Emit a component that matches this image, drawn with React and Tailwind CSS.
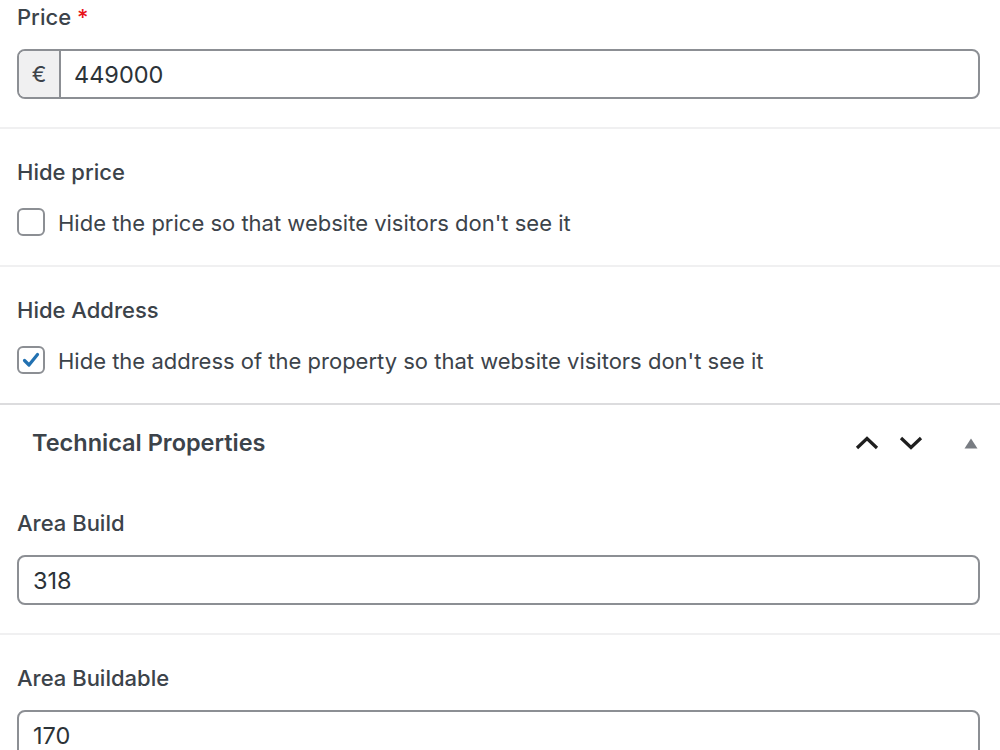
import React from "react";

const font = { fontFamily: 'Inter, "Noto Sans", "Liberation Sans", sans-serif' };

function Label({ children, required }) {
  return (
    <div className="text-[22px] leading-[28px] font-medium text-[#3c434a]">
      {children}
      {required && <span className="ml-[6px] text-[#e8141b]">*</span>}
    </div>
  );
}

function TextInput({ value, prefix }) {
  return (
    <div className="mt-[18px] flex h-[50px] overflow-hidden rounded-[8px] border-2 border-[#8c8f94] bg-white">
      {prefix && (
        <div className="flex w-[42px] shrink-0 items-center justify-center border-r-2 border-[#8c8f94] bg-[#f0f0f1] text-[22px] text-[#3c434a]">
          {prefix}
        </div>
      )}
      <div className={`flex items-center pt-[2px] text-[23.5px] text-[#2c3338] ${prefix ? "pl-[13px]" : "pl-[14px]"}`}>
        {value}
      </div>
    </div>
  );
}

function Checkbox({ checked, text }) {
  return (
    <div className="mt-[18px] flex h-[36px] items-center">
      <div className="flex h-[28px] w-[28px] shrink-0 items-center justify-center rounded-[6px] border-2 border-[#8c8f94] bg-white">
        {checked && (
          <svg width="20" height="20" viewBox="0 0 20 20">
            <path d="M3.5 10.5 L8 15 L16.5 4.5" fill="none" stroke="#2271b1" strokeWidth="3.2" strokeLinecap="round" strokeLinejoin="round" />
          </svg>
        )}
      </div>
      <span className="ml-[13px] pt-[2px] text-[22px] text-[#3c434a]">{text}</span>
    </div>
  );
}

function Field({ children, className = "" }) {
  return <div className={`pl-[17px] pr-[20px] ${className}`}>{children}</div>;
}

export default function App() {
  return (
    <div className="h-[750px] w-[1000px] overflow-hidden bg-white" style={font}>
      <Field className="pt-[3px] pb-[28px]">
        <Label required>Price</Label>
        <TextInput prefix="€" value="449000" />
      </Field>

      <Field className="border-t-2 border-[#f0f0f1] pt-[29px] pb-[25px]">
        <Label>Hide price</Label>
        <Checkbox text="Hide the price so that website visitors don't see it" />
      </Field>

      <Field className="border-t-2 border-[#f0f0f1] pt-[29px] pb-[25px]">
        <Label>Hide Address</Label>
        <Checkbox checked text="Hide the address of the property so that website visitors don't see it" />
      </Field>

      {/* postbox header with move up / move down / collapse controls */}
      <div className="flex h-[78px] items-center justify-between border-t-2 border-[#dcdcde] pl-[32px] pr-[22px]">
        <h2 className="text-[23.5px] font-semibold leading-[30px] text-[#3c434a]">Technical Properties</h2>
        <div className="flex items-center">
          <svg width="24" height="14" viewBox="0 0 24 14" className="mr-[20px]">
            <path d="M2 12 L12 2.5 L22 12" fill="none" stroke="#1e1e1e" strokeWidth="3.2" />
          </svg>
          <svg width="24" height="14" viewBox="0 0 24 14" className="mr-[41px]">
            <path d="M2 2 L12 11.5 L22 2" fill="none" stroke="#1e1e1e" strokeWidth="3.2" />
          </svg>
          <svg width="14" height="11" viewBox="0 0 14 11">
            <path d="M7 0.5 L13.5 10.5 L0.5 10.5 Z" fill="#787c82" />
          </svg>
        </div>
      </div>

      <Field className="pt-[28px] pb-[28px]">
        <Label>Area Build</Label>
        <TextInput value="318" />
      </Field>

      <Field className="border-t-2 border-[#f0f0f1] pt-[29px] pb-[28px]">
        <Label>Area Buildable</Label>
        <TextInput value="170" />
      </Field>
    </div>
  );
}
